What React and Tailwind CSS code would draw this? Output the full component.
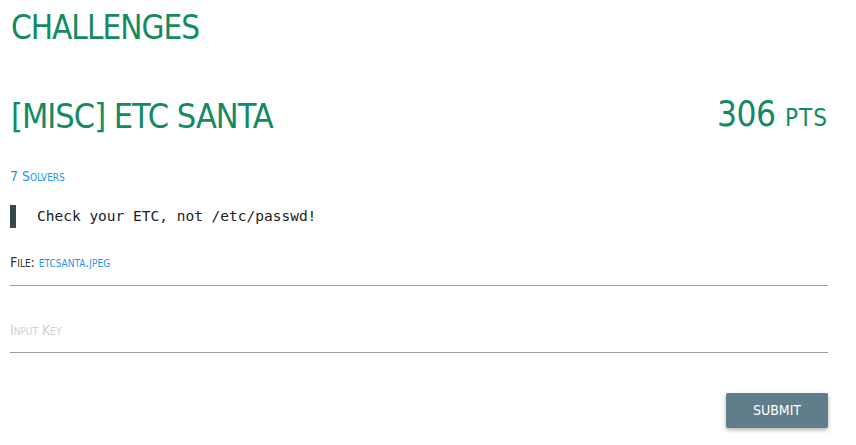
export default function App() {
  const hand = { fontFamily: '"DejaVu Sans Condensed", "Open Sans", sans-serif' };

  return (
    <div className="w-[856px] h-[445px] bg-white overflow-hidden" style={hand}>
      <div className="pl-[10px] pr-[28px]">
        <h1 className="text-[33px] leading-[44px] pt-[6px] pl-[1px] text-[#138a61] tracking-[-1px]">CHALLENGES</h1>

        <div className="mt-[40px] flex items-end justify-between">
          <h2 className="text-[34px] leading-[44px] pl-[1px] text-[#138a61] tracking-[-1px]">[MISC] ETC SANTA</h2>
          <div className="text-[35px] leading-[44px] text-[#138a61] tracking-[-0.5px] translate-y-[2px]">
            306 <span className="text-[24px] tracking-[1px]">PTS</span>
          </div>
        </div>

        <div className="mt-[29px] leading-[18px]">
          <a className="text-[14px] text-[#2196f3] [font-variant:small-caps]">7 Solvers</a>
        </div>

        <div className="mt-[20px] border-l-[6px] border-[#37474f] pl-[21px] h-[23px] flex items-center">
          <span className="text-[14.5px] text-[#222] font-['DejaVu_Sans_Mono',monospace]">Check your ETC, not /etc/passwd!</span>
        </div>

        <div className="mt-[25px] leading-[18px] text-[14px] text-[#333] [font-variant:small-caps]">
          File: <a className="text-[#2196f3]">etcsanta.jpeg</a>
        </div>

        <div className="mt-[14px] border-b border-[#9e9e9e]"></div>

        <div className="mt-[32px] pb-[10px] border-b border-[#9e9e9e]">
          <input
            className="w-full text-[14px] leading-[18px] outline-none placeholder:text-[#d0d0d0] [font-variant:small-caps]"
            placeholder="Input Key"
          />
        </div>

        <div className="mt-[40px] flex justify-end">
          <button className="w-[102px] h-[35px] bg-[#607d8b] text-white text-[14px] rounded-[2px] shadow-[0_2px_4px_rgba(0,0,0,0.3)]">
            SUBMIT
          </button>
        </div>
      </div>
    </div>
  );
}
